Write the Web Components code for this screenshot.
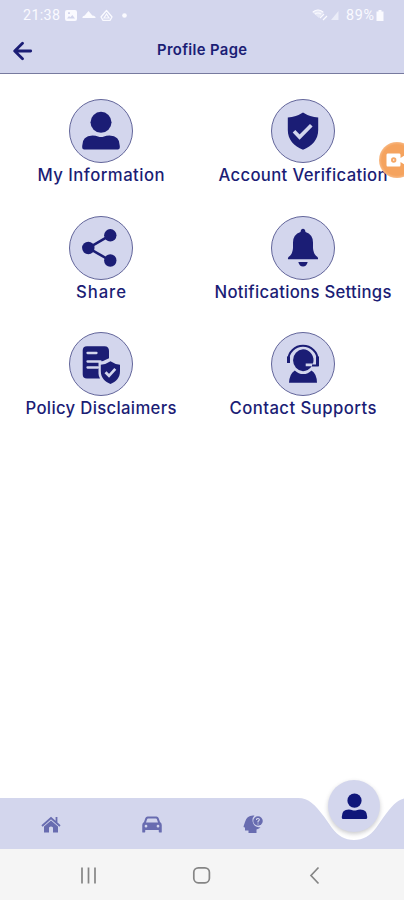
<!DOCTYPE html>
<html lang="en">
<head>
<meta charset="utf-8">
<title>Profile Page</title>
<style>
html, body { margin: 0; height: 100%; overflow: hidden; background: #fff; }
</style>
</head>
<body>
<profile-app></profile-app>
<script>
const define = (name, html, setup) => customElements.define(name, class extends HTMLElement {
  connectedCallback() {
    if (this.shadowRoot) return;
    const root = this.attachShadow({ mode: 'open' });
    const t = document.createElement('template');
    t.innerHTML = html;
    root.append(t.content.cloneNode(true));
    if (setup) setup(this, root);
  }
});

const person = '<circle cx="20" cy="11.3" r="10.5"/><path d="M1.2 38.5V35Q1.2 24.5 11.5 24.5Q15 24.5 17 25.4Q20 26.5 23 25.4Q25 24.5 28.5 24.5Q38.8 24.5 38.8 35V36.5Q38.8 38.5 36.8 38.5H3.2Q1.2 38.5 1.2 36.5Z"/>';
const glyphs = {
  person,
  shield: '<path d="M20 1.5Q27 6 35.2 6.5V19C35.2 28.5 29 35.5 20 38.7C11 35.5 4.8 28.5 4.8 19V6.5Q13 6 20 1.5Z"/><path d="M11 20.3L16.6 26L28.3 14.3" fill="none" stroke="#d3d6ed" stroke-width="3.7"/>',
  share: '<path d="M29 7.3L7.5 20L29 32.5" fill="none" stroke="currentColor" stroke-width="2.6"/><circle cx="7.3" cy="20" r="6.2"/><circle cx="29.3" cy="7.3" r="6.2"/><circle cx="29.3" cy="32.5" r="6.2"/>',
  bell: '<path d="M20 .8Q22 .8 22.5 4Q30 6.5 30 14.5V20Q30.3 26 34.5 29Q35.8 31.3 34.3 31.3H5.7Q4.2 31.3 5.5 29Q9.7 26 10 20V14.5Q10 6.5 17.5 4Q18 .8 20 .8Z"/><path d="M15.3 34H24.7Q23.5 38.6 20 38.6Q16.5 38.6 15.3 34Z"/>',
  policy: '<path d="M6 2.3H23.5Q28 2.3 28 7V14.2Q22 17.5 17.5 18V29.5Q17.5 32 19 34.6H6Q1.7 34.6 1.7 30.3V6.6Q1.7 2.3 6 2.3Z"/><path d="M6.5 9H15.5M6.5 17.5H19.5M6.5 23.5H17" stroke="#d3d6ed" stroke-width="2.3" stroke-linecap="round"/><path d="M29.5 17.3Q34 20.5 39 20.7V27C39 34 35 37.8 29.5 40C24 37.8 19.8 34 19.8 27V20.7Q25 20.5 29.5 17.3Z"/><path d="M24.5 28.3L28 31.8L34.3 24.8" fill="none" stroke="#d3d6ed" stroke-width="2.7"/>',
  support: '<path d="M5.3 18V16A14.7 14.2 0 0 1 34.7 16V21.5H29" fill="none" stroke="currentColor" stroke-width="2"/><path d="M4 12.5H7V19H4ZM33 12.5H36V22H33Z"/><path d="M20 5.3A10.8 10.8 0 0 1 30 19.5H22.7V22.3H28.8Q25 27.2 20 27.2A11 11 0 0 1 20 5.3Z"/><path d="M11.8 26.4Q15.5 30 20.3 30Q25 30 28.5 26.4Q33.8 29.5 34 38.8H6Q6.5 29.5 11.8 26.4Z"/>',
  home: '<path d="M20 13L34 25V37H24V27Q20 23 16 27V37H6V25Z"/><path d="M2 24L20 8L38 24M31 17V6" fill="none" stroke="currentColor" stroke-width="3.6"/>',
  car: '<path fill-rule="evenodd" d="M11 5H29Q32 5 33.2 8L36 16Q39.5 18 39.5 22V36Q39.5 37 38 37H35Q33.5 37 33.5 35V32H6.5V35Q6.5 37 5 37H2Q.5 37 .5 36V22Q.5 18 4 16L6.8 8Q8 5 11 5ZM12 9Q10.7 9 10.2 10.5L8 17H32L29.8 10.5Q29.3 9 28 9ZM8 21.5A2.7 2.7 0 1 0 8 27A2.7 2.7 0 1 0 8 21.5ZM32 21.5A2.7 2.7 0 1 0 32 27A2.7 2.7 0 1 0 32 21.5Z"/>',
  help: '<path d="M20 3A17 17 0 0 0 4 16L1 25Q1 27 4 27V33H11V38H27V31Q33 29 35 26Q25 28 21 20Q16 10 23 3Z"/><circle cx="30" cy="14" r="9.5"/><path d="M27 12Q27 8.5 30.5 9Q34 10 32 13L30 15V17M30 19V21" fill="none" stroke="#d3d6ed" stroke-width="2.2"/>'
};

define('app-icon', `<style>
:host { display: block; flex: none; width: 40px; height: 40px; }
svg { display: block; width: 100%; height: 100%; fill: currentColor; overflow: visible; }
</style><svg viewBox="0 0 40 40"></svg>`, (el, root) => {
  root.querySelector('svg').innerHTML = glyphs[el.getAttribute('name')];
});

/* Text spread evenly over a given advance width. */
define('fit-text', `<style>
:host { display: flex; justify-content: center; white-space: nowrap; }
span { display: block; flex: none; }
</style><span></span>`, (el, root) => {
  const span = root.querySelector('span');
  span.textContent = el.getAttribute('text');
  const target = +el.getAttribute('width');
  const gap = (target - span.getBoundingClientRect().width) / (span.textContent.length - 1);
  span.style.letterSpacing = gap + 'px';
  span.style.marginRight = -gap + 'px';
});

define('status-bar', `<style>
:host { display: flex; align-items: center; height: 30px; padding: 0 20px 0 23px; box-sizing: border-box;
  font: 14.3px/30px Roboto, sans-serif; color: #fafaff; }
svg { display: block; fill: currentColor; }
.left { width: 70px; margin-left: 5px; flex: none; }
.right { margin-left: auto; margin-right: 6px; }
.bat { margin-left: 2px; }
</style>
<fit-text text="21:38" width="37"></fit-text>
<svg class="left" width="70" height="14" viewBox="0 0 70 14">
<path fill-rule="evenodd" d="M2 2H10Q12 2 12 4V11Q12 13 10 13H2Q0 13 0 11V4Q0 2 2 2ZM2 10.5H10L7.3 7L5.3 9.3L4 8ZM3 4.3V6H5V4.3Z"/>
<path d="M17.5 10Q17 8.2 19.7 7.5L23.5 3L27.3 7.5Q31 8 30.5 10Z"/>
<path d="M41.5 2.5L47 9L45 12.3H38L36 9Z" fill="none" stroke="currentColor" stroke-width="1.3" stroke-linejoin="round"/><path d="M41.5 6L39 10H44Z" fill="none" stroke="currentColor" stroke-width="1.2"/>
<circle cx="59.5" cy="7.5" r="2.3"/></svg>
<svg class="right" width="28" height="16" viewBox="0 0 28 16"><path d="M0 5Q6 0 12 5L7 11Z" opacity=".5"/><path d="M1 5Q6 1 11 5M3 7Q6 5 9 7M8 11L12 7M11 13L15 9" fill="none" stroke="currentColor" stroke-width="1.2"/><path d="M26.5 4V13H19Z" opacity=".6"/></svg>
<fit-text text="89%" width="28"></fit-text>
<svg class="bat" width="8" height="12" viewBox="0 0 8 12"><path d="M2.5 1H5.5V2.5H7.5V12H.5V2.5H2.5Z"/></svg>`);

define('title-bar', `<style>
:host { display: grid; grid-template-columns: 45px 1fr 45px; align-items: center; height: 44px; box-sizing: border-box;
  padding-bottom: 3px; border-bottom: 1.5px solid #777a9f; font: 600 14.8px/20px Inter, sans-serif; }
svg { display: block; margin-left: 13px; margin-top: 2px; fill: none; stroke: currentColor; stroke-width: 2.8; stroke-linecap: round; stroke-linejoin: round; }
</style>
<svg width="20" height="20" viewBox="0 0 20 20"><path d="M9.5 2.2L1.7 10L9.5 17.8M2 10H17.7"/></svg>
<fit-text text="Profile Page" width="90"></fit-text>`);

define('menu-tile', `<style>
:host { display: flex; flex-direction: column; align-items: center; height: 116.5px; }
.disc { display: grid; place-items: center; width: 64px; height: 64px; box-sizing: border-box; border-radius: 50%;
  border: 1px solid #62659a; background: #d3d6ed; }
fit-text { font: 450 16.7px/22px Inter, sans-serif; margin-top: 1px; }
</style><div class="disc"><app-icon></app-icon></div>`, (el, root) => {
  const icon = document.createElement('app-icon');
  icon.setAttribute('name', el.getAttribute('icon'));
  root.querySelector('app-icon').replaceWith(icon);
  const text = document.createElement('fit-text');
  text.setAttribute('text', el.getAttribute('label'));
  text.setAttribute('width', el.getAttribute('width'));
  root.append(text);
});

define('tab-bar', `<style>
:host { display: block; position: relative; height: 51px; }
.shape { display: block; width: 100%; height: 51px; }
.tabs { position: absolute; inset: 0; display: grid; grid-template-columns: 101px 101px 101px 102px; align-items: center; justify-items: center; color: #686cb0; }
.tabs app-icon { width: 20px; height: 20px; }
.active { display: grid; place-items: center; width: 52px; height: 52px; border-radius: 50%; background: #d3d6ed;
  box-shadow: 0 2px 4px rgba(70,70,80,.28); color: #10177a; transform: translateY(-18px); }
.tabs .active app-icon { width: 27px; height: 27px; }
</style>
<svg class="shape" viewBox="0 0 404 51"><path fill="#d3d6ed" d="M0 0H298C309 0 315 7 324 18.5L332 30C338 38 345 42 354 42C363 42 370 38 376 30L384 18.5C393 7 398 0 409 0V51H0Z"/></svg>
<div class="tabs"><app-icon name="home"></app-icon><app-icon name="car"></app-icon><app-icon name="help"></app-icon><div class="active"><app-icon name="person"></app-icon></div></div>`);

define('system-nav', `<style>
:host { display: block; height: 51px; background: #f5f5f5; }
svg { display: block; fill: none; stroke: #858585; stroke-width: 1.7; }
</style><svg width="404" height="51" viewBox="0 0 404 51"><path d="M82 18.5V34.5M88.5 18.5V34.5M95 18.5V34.5"/><rect x="193.8" y="18.8" width="15.6" height="15" rx="4.5"/><path d="M318.5 18.5L311 26.5L318.5 34.5"/></svg>`);

define('record-bubble', `<style>
:host { display: grid; align-items: center; width: 36px; height: 36px; border-radius: 50%; background: radial-gradient(circle, #f5a35e 60%, #f8bb88 72%); box-sizing: border-box; padding-left: 7px; }
svg { display: block; }
</style><svg width="22" height="14" viewBox="0 0 22 14"><path fill="#fff" d="M1.5 .5H13.5Q14.5 .5 14.5 2V5L20 1.5V12.5L14.5 9V12Q14.5 13.5 13.5 13.5H1.5Q.5 13.5 .5 12V2Q.5 .5 1.5 .5Z"/><circle cx="7.7" cy="7" r="2.7" fill="#f5a766"/><circle cx="7.7" cy="7" r=".8" fill="#fff"/></svg>`);

define('profile-app', `<style>
:host { display: flex; flex-direction: column; position: relative; width: 404px; height: 900px; overflow: hidden; background: #fff; color: #1b1d75; }
header { background: #d3d6ed; }
main { flex: 1; display: grid; grid-template-columns: 202px 202px; align-content: start; padding-top: 25px; }
record-bubble { position: absolute; left: 379px; top: 142px; }
</style>
<header><status-bar></status-bar><title-bar></title-bar></header>
<main>
<menu-tile icon="person" label="My Information" width="127"></menu-tile>
<menu-tile icon="shield" label="Account Verification" width="169"></menu-tile>
<menu-tile icon="share" label="Share" width="50"></menu-tile>
<menu-tile icon="bell" label="Notifications Settings" width="177"></menu-tile>
<menu-tile icon="policy" label="Policy Disclaimers" width="151"></menu-tile>
<menu-tile icon="support" label="Contact Supports" width="147"></menu-tile>
</main>
<tab-bar></tab-bar><system-nav></system-nav><record-bubble></record-bubble>`);
</script>
</body>
</html>
